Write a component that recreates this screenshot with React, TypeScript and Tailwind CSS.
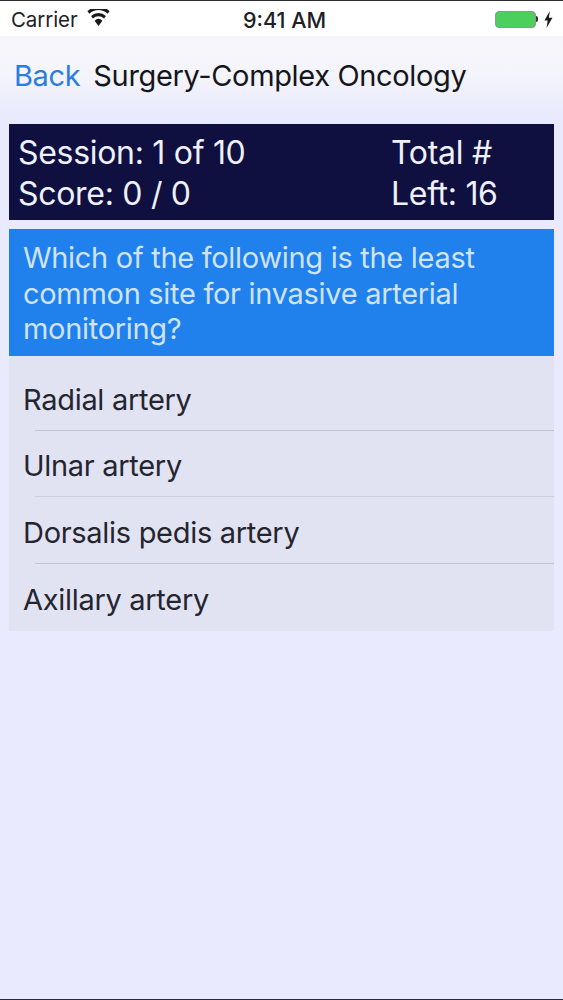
import React from "react";

const font = { fontFamily: "Inter, sans-serif" };

function Row({ text, last, strong }: { text: string; last?: boolean; strong?: boolean }) {
  return (
    <div className="h-[66.7px] relative flex items-center pl-[14px] pt-[4px] text-[29px] tracking-[-0.3px] text-[#24252f]">
      <span>{text}</span>
      {!last && (
        <div className={`absolute left-[26px] right-0 bottom-0 h-px ${strong ? "bg-[#c2c2d0]" : "bg-[#cfd0de]"}`} />
      )}
    </div>
  );
}

export default function App() {
  return (
    <div className="w-[563px] h-[1000px] overflow-hidden flex flex-col bg-[#e9eafd]" style={font}>
      <div className="h-px bg-[#2b2b2e]" />
      <div className="h-[35px] bg-white flex items-center justify-between relative text-[#202024]">
        <div className="flex items-center pl-[11px] gap-[9px] pt-[3px]">
          <span className="text-[20.5px] tracking-[-0.1px]">Carrier</span>
          <svg width="23" height="17" viewBox="1.5 3 21 14" preserveAspectRatio="none" fill="#1a1a1e" className="-mt-[5px]">
            <path d="M12 17l-3.6-4.4a5.6 5.6 0 0 1 7.2 0z" />
            <path d="M6.9 10.8L5.2 8.7a10.6 10.6 0 0 1 13.6 0l-1.7 2.1a8 8 0 0 0-10.2 0z" />
            <path d="M3.7 6.9L1.9 4.8a15.6 15.6 0 0 1 20.2 0l-1.8 2.1a12.9 12.9 0 0 0-16.6 0z" />
          </svg>
        </div>
        <span className="absolute left-[243px] top-[3px] text-[21.5px] font-medium">9:41 AM</span>
        <div className="flex items-center pr-[10px] gap-[6px] pt-[1px]">
          <div className="flex items-center">
            <div className="w-[41px] h-[17px] rounded-[4px] bg-[#4ccf5c] border border-[#8a9a8c]" />
            <div className="w-[2px] h-[6px] rounded-r-[2px] bg-[#333]" />
          </div>
          <svg width="9" height="17" viewBox="0 0 10 16" preserveAspectRatio="none" fill="#1a1a1e">
            <path d="M6.5 0L0.5 9h3.6L2.8 16l6.6-9.6H5.4z" />
          </svg>
        </div>
      </div>
      <div className="h-[78px] bg-gradient-to-b from-[#f6f6fa] via-[#f4f4fb] to-[#e9ebfc] flex items-center pl-[14px] text-[29px] tracking-[-0.35px] pt-[2px]">
        <span className="text-[#2a7de1] mr-[13px]">Back</span>
        <span className="text-[#15151c]">Surgery-Complex Oncology</span>
      </div>
      <div className="mx-[9px] mt-[10px] h-[96px] bg-[#0f1040] text-[#eef0fb] text-[32px] leading-[40.5px] tracking-[-0.3px] flex pl-[9px] pt-[9px]">
        <div className="w-[373px]">
          <div>Session: 1 of 10</div>
          <div>Score: 0 / 0</div>
        </div>
        <div>
          <div>Total #</div>
          <div>Left: 16</div>
        </div>
      </div>
      <div className="mx-[9px] mt-[9px] h-[127px] bg-[#2080ec] text-[#cfe4fb] text-[29px] leading-[35.5px] tracking-[-0.3px] pl-[14px] pr-[40px] pt-[11px]">
        Which of the following is the least common site for invasive arterial monitoring?
      </div>
      <div className="mx-[9px] pt-[8px] bg-[#e2e3f2] flex flex-col">
        <Row text="Radial artery" strong />
        <Row text="Ulnar artery" />
        <Row text="Dorsalis pedis artery" strong />
        <Row text="Axillary artery" last />
      </div>
      <div className="flex-1" />
      <div className="h-px bg-[#2b2b3a]" />
    </div>
  );
}
